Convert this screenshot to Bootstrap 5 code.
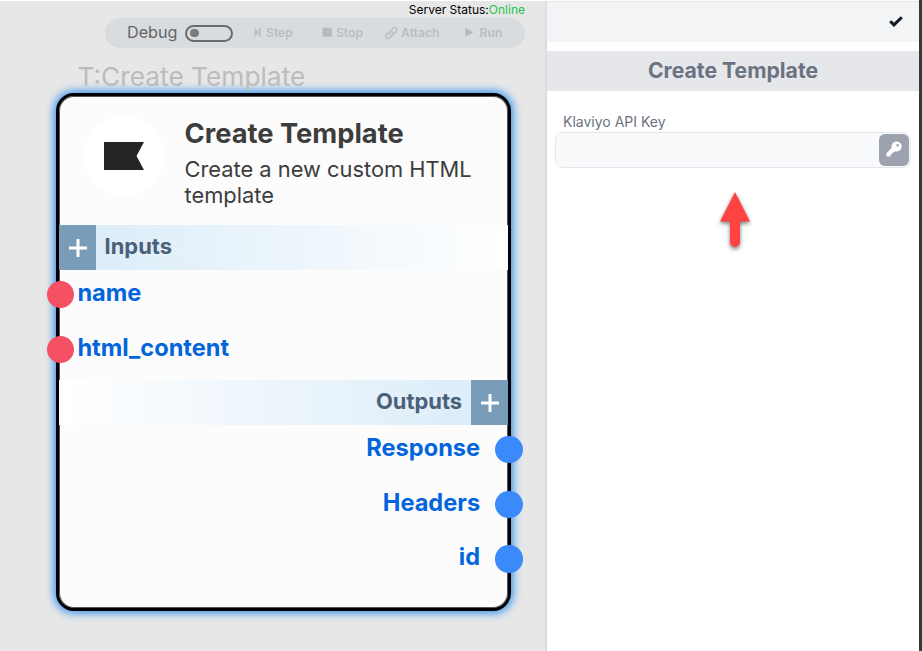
<!DOCTYPE html>
<html lang="en">
<head>
<meta charset="utf-8">
<meta name="viewport" content="width=device-width, initial-scale=1">
<title>Create Template</title>
<link href="https://cdn.jsdelivr.net/npm/bootstrap@5.3.0/dist/css/bootstrap.min.css" rel="stylesheet">
<style>
body{font-family:Inter,"Liberation Sans",sans-serif;color:#3d3d3d}
.app{height:651px;width:922px;padding-top:1px;background:#fff}
.canvas{width:545px;background:#e7e7e7}
.divider{width:2px;background:#d9dde1}
.side{width:372px;background:#fff}
.edge{width:3px;background:#373a39;margin-top:-1px}
.status{font-size:12px;line-height:17px;padding-right:20px;color:#000}
.online{color:#1fc24a}
.toolbar{width:420px;height:30px;margin-left:105px;border-radius:15px;background:#d8dcdf;color:#bdbdbd;font-size:12.2px;font-weight:600;padding-left:22px}
.debug{font-size:16.2px;font-weight:400;color:#666;width:58px;margin-top:-2px}
.switch{width:48px;height:17px;border:2px solid #6b6b6b;border-radius:9px;padding-left:3px}
.knob{width:8.5px;height:8.5px;border-radius:50%;background:#7b7b7b}
.tool{line-height:30px}
.tool-step{margin-left:20px}
.tool-stop{margin-left:29px}
.tool-attach{margin-left:22px}
.tool-run{margin-left:26px}
.caption{font-size:26.3px;line-height:32px;color:#bcbcbc;margin:13px 0 0 77.5px}
.node{width:455px;height:518px;margin-left:56px;border:3px solid #000;border-radius:18px;background:#fcfcfc;box-shadow:0 0 8px 2px #2f8ff0,inset 0 0 0 1px #555}
.node-head{height:128.6px}
.avatar{width:82px;height:82px;border-radius:50%;background:#fff;margin:19.4px 0 0 24px}
.node-info{width:323px;margin-right:.5px}
.node-title{font-size:27.3px;line-height:34px;font-weight:700;margin:21px 0 0}
.node-text{font-size:21.85px;line-height:26px;margin:5px 0 0;width:300px}
.band{height:45.5px;font-size:21.9px;font-weight:700;color:#4b6079}
.band-in{background:linear-gradient(90deg,#d9ebf8,#fff)}
.band-out{background:linear-gradient(270deg,#d9ebf8,#fff)}
.band-text{padding-bottom:2px}
.band-in .band-text{margin-left:8.6px}
.band-out .band-text{margin-right:9px}
.plus{width:37px;background:#799cb8;padding-top:2px}
.port{height:54.75px;padding-bottom:5.6px;font-size:23.6px;font-weight:700;color:#0265dc}
.port-text{padding-bottom:4px}
.dot{width:27.4px;height:27.4px;border-radius:50%;flex:none}
.dot-in{background:#f55064;margin-left:-12px;margin-right:3px}
.dot-out{background:#3b8afc;margin-right:-14.5px;margin-left:15px}
.side-top{height:41px;background:#f3f4f6;border-top:1px solid #e5e7eb;padding:0 16px 2px 0}
.side-title{height:40px;margin-top:9px;background:#e5e7eb;color:#6b7280;font-size:21.2px;font-weight:700}
.key-label{font-size:14px;line-height:20px;color:#6b7280;margin:21px 0 0 16px}
.key-field{width:356px;height:36px;margin-left:8px;border:1px solid #e5e7eb;border-radius:8px;background:#f9fafb;padding:1px}
.key-btn{width:30px;height:32px;border-radius:6px;background:#9ca3af;padding-bottom:3px}
.pointer{margin:19.5px 0 0 168px}
.pointer g{filter:drop-shadow(0 2px 2px #0008)}
</style>
<script src="https://cdn.jsdelivr.net/npm/bootstrap@5.3.0/dist/js/bootstrap.bundle.min.js"></script>
</head>
<body class="overflow-hidden">
<div class="app d-flex">
  <main class="canvas">
    <div class="status text-end">Server Status:<span class="online">Online</span></div>
    <div class="toolbar d-flex align-items-center">
      <span class="debug">Debug</span>
      <span class="switch d-flex align-items-center"><span class="knob"></span></span>
      <span class="tool tool-step d-flex align-items-center"><svg width="13" height="12" viewBox="0 0 13 12" fill="#bdbdbd"><path d="M1.5 1 6 5.5 1.5 10zM6 .5h1.7v9.6H6z"/></svg>Step</span>
      <span class="tool tool-stop d-flex align-items-center"><svg width="14" height="12" viewBox="0 0 14 12" fill="#b9b9b9"><path d="M.5 .7h9.3v9H.5z"/></svg>Stop</span>
      <span class="tool tool-attach d-flex align-items-center"><svg width="16" height="14" viewBox="0 0 16 14" fill="none" stroke="#bdbdbd" stroke-width="1.5" stroke-linecap="round"><path d="M5.4 8.1C4 6.7 4.6 5.5 5.4 4.7L7.8 2.3C10.1.1 13.5 3.3 11.3 5.7L9.500 7.5M7.3 5.9C8.7 7.3 8.1 8.5 7.3 9.3L4.9 11.7C2.6 13.900-.8 10.7 1.4 8.3L2.9 6.8"/></svg>Attach</span>
      <span class="tool tool-run d-flex align-items-center"><svg width="14" height="12" viewBox="0 0 14 12" fill="#b9b9b9"><path d="M.3 .7 8.5 5.2.3 9.7z"/></svg>Run</span>
    </div>
    <div class="caption">T:Create Template</div>
    <section class="node">
      <div class="node-head d-flex">
        <div class="avatar d-flex align-items-center justify-content-center">
          <svg width="40" height="28" viewBox="0 0 40 28"><path d="M0 0h40l-7.5 14L40 28H0z" fill="#242527"/></svg>
        </div>
        <div class="node-info ms-auto">
          <h1 class="node-title">Create Template</h1>
          <p class="node-text">Create a new custom HTML template</p>
        </div>
      </div>
      <div class="band band-in d-flex">
        <span class="plus d-flex align-items-center justify-content-center"><svg width="18" height="18" viewBox="0 0 18 18" stroke="#fff" stroke-width="3"><path d="M0 9h18M9 0v18"/></svg></span>
        <span class="band-text align-self-center">Inputs</span>
      </div>
      <div class="port d-flex align-items-center"><span class="dot dot-in"></span><span class="port-text">name</span></div>
      <div class="port d-flex align-items-center"><span class="dot dot-in"></span><span class="port-text">html_content</span></div>
      <div class="band band-out d-flex justify-content-end">
        <span class="band-text align-self-center">Outputs</span>
        <span class="plus d-flex align-items-center justify-content-center"><svg width="18" height="18" viewBox="0 0 18 18" stroke="#fff" stroke-width="3"><path d="M0 9h18M9 0v18"/></svg></span>
      </div>
      <div class="port d-flex align-items-center justify-content-end"><span class="port-text">Response</span><span class="dot dot-out"></span></div>
      <div class="port d-flex align-items-center justify-content-end"><span class="port-text">Headers</span><span class="dot dot-out"></span></div>
      <div class="port d-flex align-items-center justify-content-end"><span class="port-text">id</span><span class="dot dot-out"></span></div>
    </section>
  </main>
  <div class="divider"></div>
  <aside class="side">
    <div class="side-top d-flex align-items-center justify-content-end">
      <svg width="14" height="11" viewBox="0 0 14 11" fill="none" stroke="#111827" stroke-width="3"><path d="M1.2 5.2 5 8.9 12.8 1.3"/></svg>
    </div>
    <div class="side-title d-flex align-items-center justify-content-center">Create Template</div>
    <div class="key-label">Klaviyo API Key</div>
    <div class="key-field d-flex justify-content-end">
      <span class="key-btn d-flex align-items-center justify-content-center"><svg width="16" height="16" viewBox="0 0 16 16" fill="#fff"><path fill-rule="evenodd" d="M10.3.5a5 5 0 1 1-1.2 9.7L7.6 11.5H6.3v1.4H4.9l-.1 1.6-1 1H.5v-3.4l5.2-5.2A5 5 0 0 1 10.3.5zM11.6 3a1.3 1.3 0 1 0 0 2.6 1.3 1.3 0 0 0 0-2.6z"/></svg></span>
    </div>
    <svg class="pointer d-block" width="40" height="70" viewBox="0 0 40 70"><g fill="#ff4343"><path d="M20 4 35 33.5H25V54a5 5 0 0 1-10 0V33.5H5z"/></g></svg>
  </aside>
  <div class="edge"></div>
</div>
</body>
</html>
